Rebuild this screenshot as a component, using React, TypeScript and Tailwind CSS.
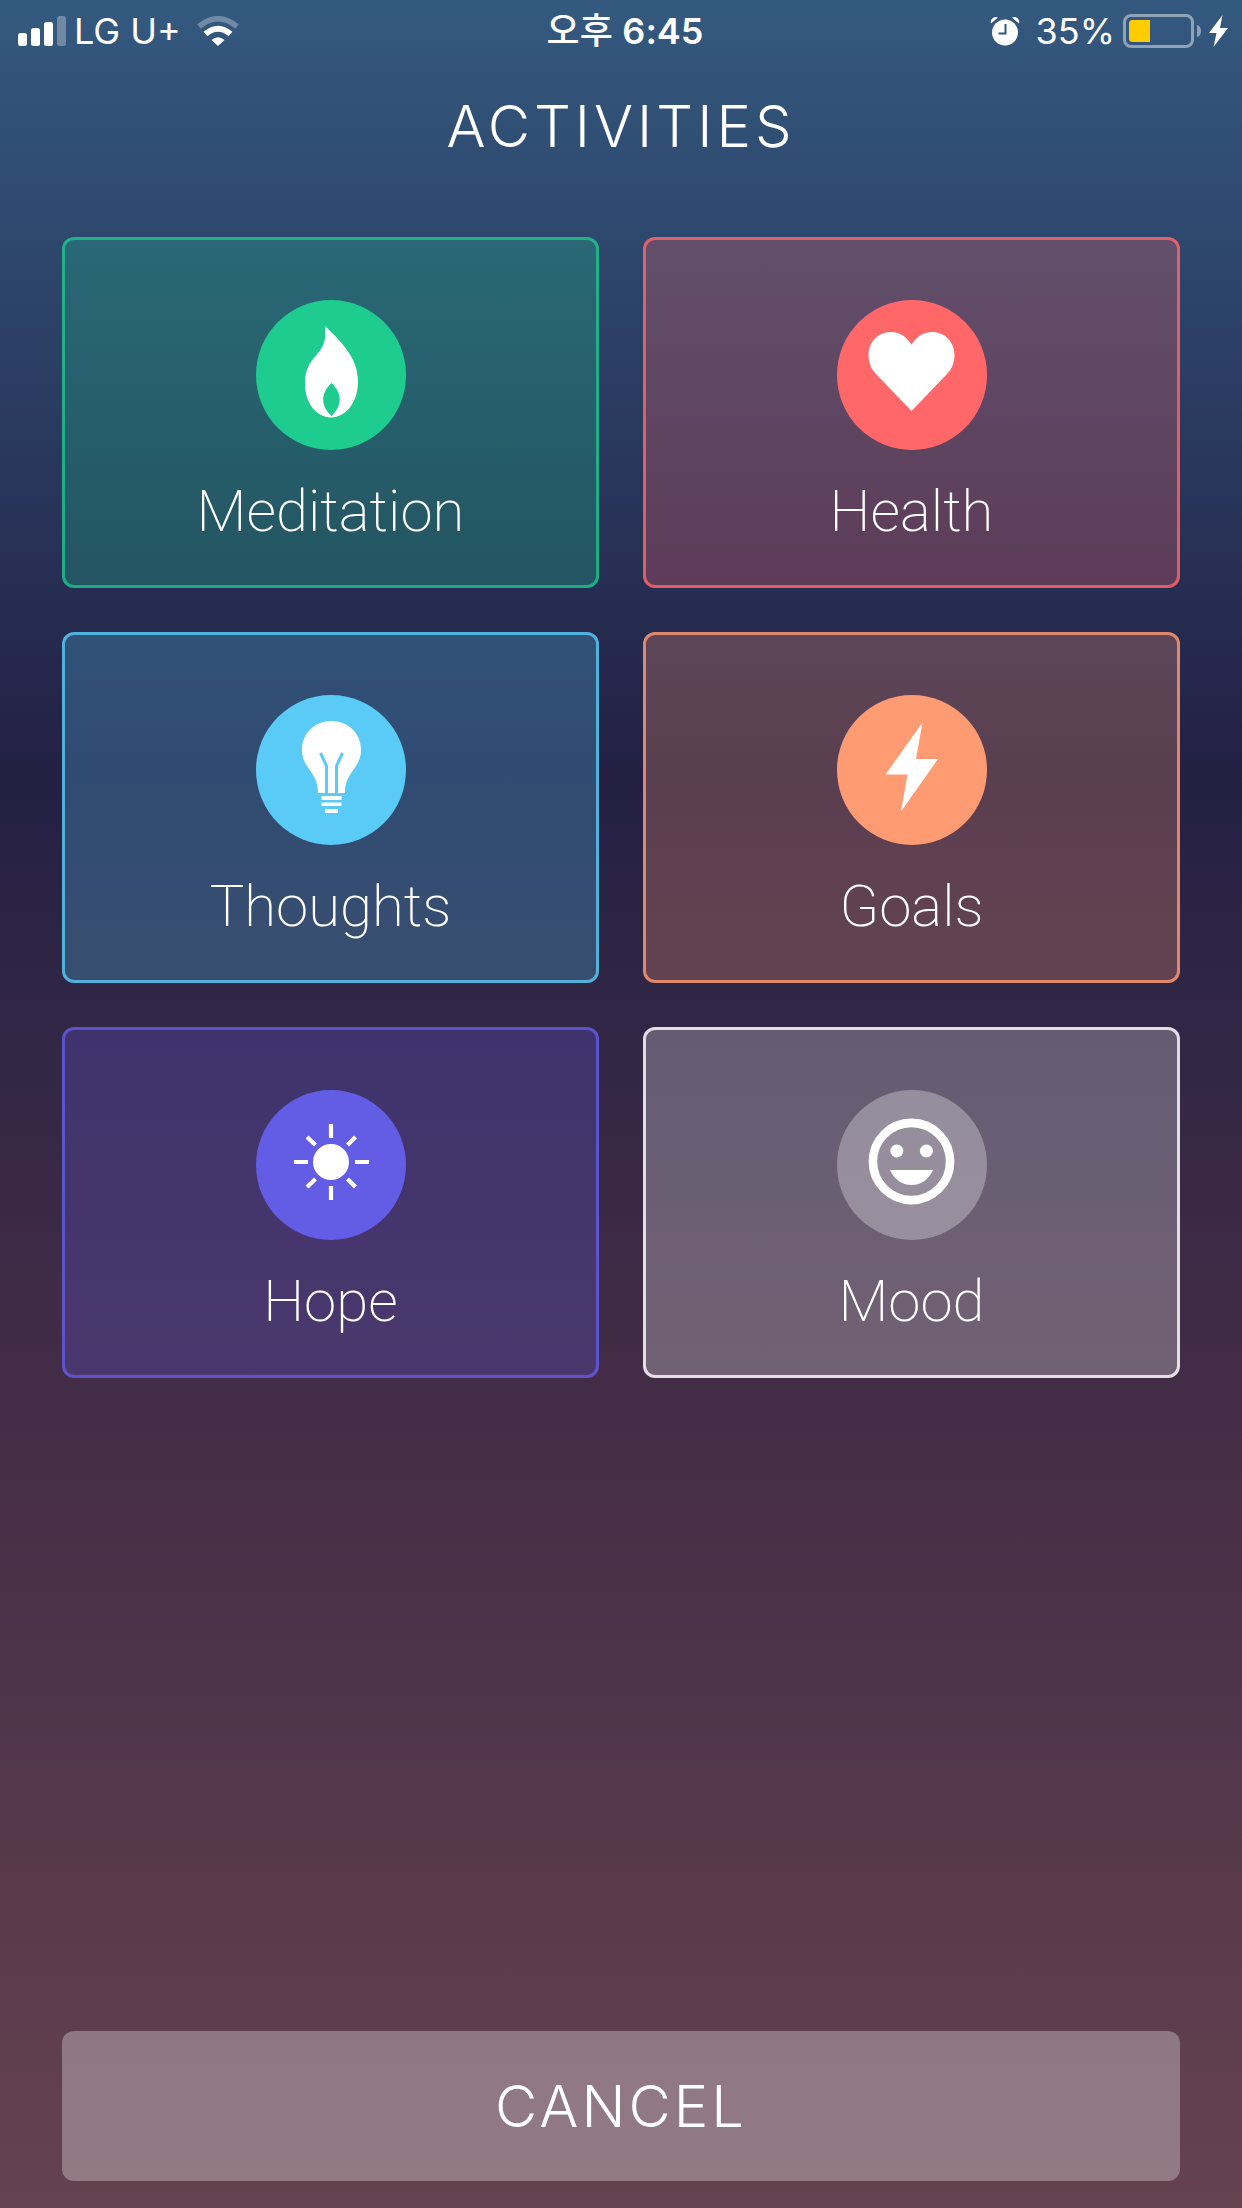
import React from 'react';

interface IActivity {
    name: string;
    card: string;
    circle: string;
    icon: React.ReactNode;
}

const activities: IActivity[] = [
    {
        name: "Meditation",
        card: "bg-[#1dcc8e]/25 border-[#1dcc8e]/75",
        circle: "bg-[#1dcc8e]",
        icon: (
            <path
                fill="#fff"
                fillRule="evenodd"
                d="M69 26C82 39 102 56 102 81C102 103 90 117 75 117.500C60 117 49 103 49 84C49 64 59 58 65 49C69 43 70 36 69 26ZM75.500 83C64.500 93 64.500 106 75.500 116C86.500 106 86.500 93 75.500 83Z"
            />
        )
    },
    {
        name: "Health",
        card: "bg-[#ff6769]/25 border-[#ff6769]/80",
        circle: "bg-[#ff6769]",
        icon: (
            <path
                fill="#fff"
                d="M74.500 44.500C69 36 62 32 54 32C41 32 31.500 42 31.500 55C31.500 62 34 69 39 74L74.500 111L110 74C115 69 117.500 62 117.500 55C117.500 42 108 32 95 32C87 32 80 36 74.500 44.500Z"
            />
        )
    },
    {
        name: "Thoughts",
        card: "bg-[#59cbf6]/25 border-[#59cbf6]/80",
        circle: "bg-[#59cbf6]",
        icon: (
            <>
                <path fill="#fff" d="M62 98C62 76 46 74 46 55C46 38 59 26 75.500 26C92 26 105 38 105 55C105 74 89 76 89 98Z" />
                <path fill="none" stroke="#59cbf6" strokeWidth="3" d="M64.500 58L70.500 71V98.500M86.500 58L80.500 71V98.500" />
                <path fill="#fff" d="M65.500 101H85.500V105H65.500ZM65.500 107.500H85.500V111H65.500ZM69 114H82V118H69Z" />
            </>
        )
    },
    {
        name: "Goals",
        card: "bg-[#ff9b73]/25 border-[#ff9b73]/80",
        circle: "bg-[#ff9b73]",
        icon: <path fill="#fff" d="M85.500 27.500L79 64H101L64 116.500L70.500 79.500H48.500Z" />
    },
    {
        name: "Hope",
        card: "bg-[#625de4]/25 border-[#625de4]/80",
        circle: "bg-[#625de4]",
        icon: (
            <>
                <circle cx="75" cy="72" r="18" fill="#fff" />
                <path
                    fill="none"
                    stroke="#fff"
                    strokeWidth="4.200"
                    d="M75 34V48M75 96V110M38 72H52M99 72H113M51 47L59.500 55M99.500 47L91.500 55M59.500 89L51 97M91.500 89L99.500 97"
                />
            </>
        )
    },
    {
        name: "Mood",
        card: "bg-white/25 border-white/80",
        circle: "bg-white/30",
        icon: (
            <>
                <circle cx="74.500" cy="71.500" r="38.600" fill="none" stroke="#fff" strokeWidth="8.600" />
                <circle cx="59.800" cy="61" r="6.500" fill="#fff" />
                <circle cx="89.400" cy="61" r="6.500" fill="#fff" />
                <path fill="#fff" d="M53 80H96C92 89 84 95 74.500 95C65 95 57 89 53 80Z" />
            </>
        )
    }
];

const SignalIcon = () => (
    <svg width="48" height="30" viewBox="0 0 48 30" fill="#fff" aria-hidden="true">
        <rect x="0" y="17" width="9" height="13" rx="2.500" />
        <rect x="13" y="12" width="9" height="18" rx="2.500" />
        <rect x="26" y="6" width="9" height="24" rx="2.500" />
        <rect x="39" y="0" width="9" height="30" rx="2.500" opacity="0.3" />
    </svg>
);

const WifiIcon = () => (
    <svg width="42" height="30" viewBox="0 0 42 30" fill="none" aria-hidden="true">
        <path d="M2 10.500Q21 -5 40 10.500" stroke="#fff" strokeWidth="5.500" opacity="0.3" />
        <path d="M8.500 18Q21 7.500 33.500 18" stroke="#fff" strokeWidth="6" />
        <path d="M14.500 24Q21 18.500 27.500 24L21 30Z" fill="#fff" />
    </svg>
);

const AlarmIcon = () => (
    <svg width="30" height="30" viewBox="0 0 30 30" fill="none" aria-hidden="true">
        <circle cx="15" cy="16.500" r="13" fill="#fff" />
        <path d="M1 7.500A5 5 0 0 1 8 1.500ZM29 7.500A5 5 0 0 0 22 1.500Z" fill="#fff" />
        <path d="M15.500 8V17.500H8.500" stroke="#33567e" strokeWidth="2" />
    </svg>
);

const BatteryIcon = () => (
    <svg width="78" height="34" viewBox="0 0 78 34" fill="none" aria-hidden="true">
        <rect x="1.500" y="1.500" width="68" height="31" rx="6.500" stroke="#fff" strokeOpacity="0.45" strokeWidth="3" />
        <path d="M74 11Q78 12 78 17T74 23Z" fill="#fff" fillOpacity="0.45" />
        <path d="M27 6V28H9.500Q6 28 6 24.500V9.500Q6 6 9.500 6Z" fill="#fc0" />
    </svg>
);

const BoltIcon = () => (
    <svg width="19" height="32" viewBox="0 0 19 32" fill="#fff" aria-hidden="true">
        <path d="M13.500 0L0 18H7.500L4.500 32L19 13H11Z" />
    </svg>
);

const StatusBar = () => (
    <div className="grid h-[62px] grid-cols-[1fr_auto_1fr] items-center pr-[14px] pl-[18px] text-[36px] leading-[48px]">
        <div className="flex items-center">
            <SignalIcon />
            <span className="ml-2">LG U+</span>
            <span className="ml-4"><WifiIcon /></span>
        </div>
        <div className="pl-1 font-medium">오후 <span className="font-semibold">6:45</span></div>
        <div className="flex items-center justify-end">
            <AlarmIcon />
            <span className="mr-2 ml-4">35%</span>
            <BatteryIcon />
            <span className="ml-2"><BoltIcon /></span>
        </div>
    </div>
);

const App: React.FC = () => {
    return (
        <div className="flex min-h-screen flex-col bg-[linear-gradient(180deg,#34597f_0%,#2e476d_11%,#262b50_28%,#232044_35%,#312645_46%,#432c46_63%,#5d3d4d_91%,#66424f_100%)] font-['Inter','Noto_Sans_CJK_KR',sans-serif] text-white">
            <StatusBar />
            <main className="flex grow flex-col px-[62px] pb-[27px]">
                <h1 className="mt-[34px] text-center text-[58px] leading-[60px] font-light tracking-[4px]">ACTIVITIES</h1>
                <div className="mt-[81px] grid grid-cols-2 gap-11">
                    {activities.map((activity) => (
                        <button
                            type="button"
                            key={activity.name}
                            className={`flex flex-col items-center rounded-xl border-3 pt-[60px] pb-[38px] ${activity.card}`}
                        >
                            <span className={`size-[150px] rounded-full ${activity.circle}`}>
                                <svg viewBox="0 0 150 150" className="size-full" aria-hidden="true">
                                    {activity.icon}
                                </svg>
                            </span>
                            <span className="mt-[25px] font-['Roboto'] text-[58px] leading-[72px] font-extralight">{activity.name}</span>
                        </button>
                    ))}
                </div>
                <button
                    type="button"
                    className="mt-auto h-[150px] rounded-xl bg-white/30 text-[58px] leading-[72px] font-light tracking-[3px]"
                >
                    CANCEL
                </button>
            </main>
        </div>
    );
};

export default App;
